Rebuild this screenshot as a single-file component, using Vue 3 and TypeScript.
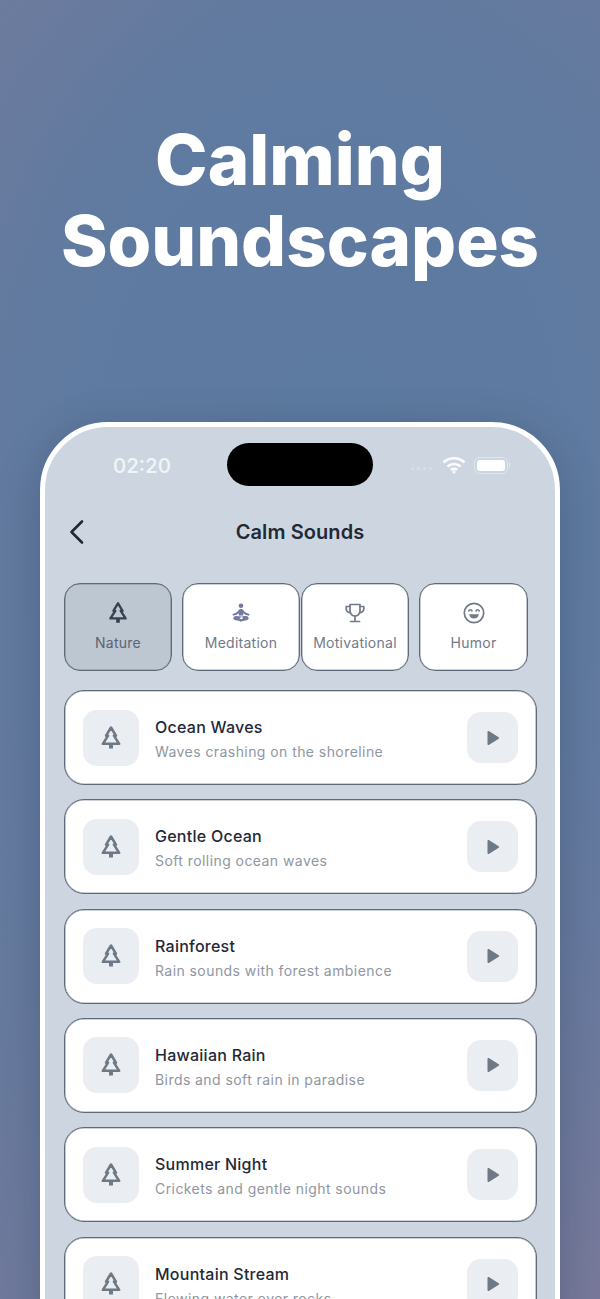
<template>
  <div class="page">
    <h1 class="headline">Calming<br />Soundscapes</h1>

    <div class="phone">
      <div class="island"></div>

      <div class="status-bar">
        <span class="time">02:20</span>
        <div class="status-icons">
          <div class="signal"><i v-for="n in 4" :key="n"></i></div>
          <svg class="wifi" viewBox="0 0 24 18" width="24" height="18">
            <path d="M1.500 6.500a15 15 0 0 1 21 0" />
            <path d="M5.500 10.500a9.500 9.500 0 0 1 13 0" />
            <path d="M9 14a4.500 4.500 0 0 1 6 0" />
            <circle cx="12" cy="16" r="1.600" />
          </svg>
          <div class="battery"><div class="battery-fill"></div></div>
        </div>
      </div>

      <header class="nav">
        <svg class="back" viewBox="0 0 16 26" width="16" height="26">
          <path d="M13 2.500 2.500 13 13 23.500" />
        </svg>
        <h2>Calm Sounds</h2>
      </header>

      <div class="tabs">
        <button
          v-for="tab in tabs"
          :key="tab.id"
          class="tab"
          :class="[tab.id, { active: tab.id === activeTab }]"
          @click="activeTab = tab.id"
        >
          <svg v-if="tab.id === 'nature'" class="tab-icon tree" viewBox="0 0 24 24" width="26" height="26">
            <path d="M12 3 7.800 10H9.500L5 17h14l-4.500-7h1.700Z" />
            <path class="solid" d="M10.300 17h3.400v4h-3.400Z" />
          </svg>
          <svg v-else-if="tab.id === 'meditation'" class="tab-icon" viewBox="0 0 24 24" width="24" height="24">
            <g class="calm">
              <circle cx="12" cy="4.800" r="2.300" />
              <path d="M12 8c-1.300 0-2.100.7-2.600 1.600-.8 1.300-2.400 2.200-4.500 3l-1.500.6.700 1.500 1.500-.4c1.900-.6 3.200-1.200 4.200-2.100V14.500h4.400v-2.300c1 .9 2.300 1.500 4.200 2.100l1.500.4.700-1.500-1.500-.6c-2.100-.8-3.700-1.700-4.500-3C14.100 8.700 13.300 8 12 8Z" />
              <path d="M6.800 15c-2.400.3-3.500 3.100-1.100 4l4.800.9 1.900-1.500-2-1.100 2.800-1.800Z" />
              <path d="M17.200 15c2.400.3 3.500 3.100 1.100 4l-7.300 1.700-.6-1.800 3.700-1.400-1.200-1.400 1.700-1Z" />
            </g>
          </svg>
          <svg v-else-if="tab.id === 'motivational'" class="tab-icon line" viewBox="0 0 24 24" width="24" height="24">
            <path d="M7 3.500h10v6.500a5 5 0 0 1-10 0Z" />
            <path d="M7 5.500H3.200v2.300c0 2 1.500 3.700 4.300 4M17 5.500h3.800v2.300c0 2-1.500 3.700-4.300 4" />
            <path d="M12 15v5M7.500 20.500h9" />
          </svg>
          <svg v-else class="tab-icon line" viewBox="0 0 24 24" width="24" height="24">
            <circle cx="12" cy="12" r="9.700" />
            <path d="M6.800 9.800c.7-1.400 2.500-1.400 3.200 0M14 9.800c.7-1.400 2.500-1.400 3.200 0" />
            <path class="solid" d="M7.200 13.200h9.600c-.2 2.700-2.300 4.300-4.800 4.300s-4.600-1.600-4.800-4.300Z" />
          </svg>
          <span>{{ tab.label }}</span>
        </button>
      </div>

      <div class="sound-list">
        <div v-for="sound in sounds" :key="sound.title" class="sound-card">
          <div class="sound-icon">
            <svg class="tree" viewBox="0 0 24 24" width="28" height="28">
              <path d="M12 3 7.800 10H9.500L5 17h14l-4.500-7h1.700Z" />
              <path class="solid" d="M10.300 17h3.400v4h-3.400Z" />
            </svg>
          </div>
          <div class="sound-text">
            <h3>{{ sound.title }}</h3>
            <p>{{ sound.subtitle }}</p>
          </div>
          <button class="play">
            <svg viewBox="0 0 14 16" width="14" height="16"><path d="M1.500 1.800c0-.7.700-1.100 1.300-.7l9.900 6.200c.5.300.5 1.100 0 1.400l-9.900 6.200c-.6.400-1.300 0-1.300-.7Z" /></svg>
          </button>
        </div>
      </div>
    </div>
  </div>
</template>

<script setup lang="ts">
import { ref } from 'vue'

interface Tab {
  id: string
  label: string
}

interface Sound {
  title: string
  subtitle: string
}

const tabs: Tab[] = [
  { id: 'nature', label: 'Nature' },
  { id: 'meditation', label: 'Meditation' },
  { id: 'motivational', label: 'Motivational' },
  { id: 'humor', label: 'Humor' }
]

const sounds: Sound[] = [
  { title: 'Ocean Waves', subtitle: 'Waves crashing on the shoreline' },
  { title: 'Gentle Ocean', subtitle: 'Soft rolling ocean waves' },
  { title: 'Rainforest', subtitle: 'Rain sounds with forest ambience' },
  { title: 'Hawaiian Rain', subtitle: 'Birds and soft rain in paradise' },
  { title: 'Summer Night', subtitle: 'Crickets and gentle night sounds' },
  { title: 'Mountain Stream', subtitle: 'Flowing water over rocks' }
]

const activeTab = ref('nature')
</script>

<style>
html,
body {
  margin: 0;
  overflow: hidden;
}
</style>

<style scoped>
.page {
  height: 1299px;
  overflow: hidden;
  box-sizing: border-box;
  padding-top: 119px;
  font-family: Inter, "Noto Sans", sans-serif;
  background:
    radial-gradient(ellipse 620px 900px at 55% 36%, #5d7aa0 0%, #607aa0 45%, rgba(96, 122, 160, 0) 100%),
    linear-gradient(135deg, #787c9b 0%, #697a9d 50%, #78799a 100%);
}

.headline {
  margin: 0;
  color: #fff;
  font-size: 70.700px;
  line-height: 81px;
  font-weight: 800;
  text-align: center;
  letter-spacing: 0;
}

.phone {
  position: relative;
  box-sizing: border-box;
  width: 520px;
  height: 1000px;
  margin: 141px auto 0;
  border: 5px solid #fff;
  border-radius: 68px 68px 0 0;
  background: #cdd6e0;
  box-shadow: 0 8px 40px rgba(40, 52, 80, 0.3);
}

.island {
  position: absolute;
  top: 16px;
  left: 182px;
  width: 146px;
  height: 43px;
  border-radius: 22px;
  background: #000;
}

.status-bar {
  display: flex;
  justify-content: space-between;
  align-items: center;
  height: 28px;
  padding: 24px 47px 0 68px;
}

.time {
  color: #f2f5f8;
  font-size: 20.500px;
  font-weight: 500;
}

.status-icons {
  display: flex;
  align-items: center;
}

.signal {
  display: flex;
  gap: 3px;
  margin: 7px 10px 0 0;
}

.signal i {
  width: 3px;
  height: 3px;
  border-radius: 50%;
  background: #d9e0e8;
}

.wifi {
  margin-right: 8px;
}

.wifi path {
  fill: none;
  stroke: #fbfcfd;
  stroke-width: 2.600;
}

.wifi circle {
  fill: #fbfcfd;
}

.battery {
  position: relative;
  box-sizing: border-box;
  width: 34px;
  height: 17px;
  padding: 2px;
  border: 1px solid #e0e6ec;
  border-radius: 6px;
}

.battery::after {
  content: "";
  position: absolute;
  top: 4px;
  right: -3px;
  width: 1px;
  height: 6px;
  background: #e0e6ec;
}

.battery-fill {
  height: 100%;
  border-radius: 3px;
  background: #fff;
}

.nav {
  position: relative;
  display: flex;
  align-items: center;
  justify-content: center;
  height: 40px;
  margin-top: 33px;
}

.nav h2 {
  margin: 0;
  color: #1f2937;
  font-size: 20px;
  line-height: 24px;
  font-weight: 600;
  letter-spacing: 0.1px;
}

.back {
  position: absolute;
  left: 24px;
  top: 7px;
}

.back path {
  fill: none;
  stroke: #1f2937;
  stroke-width: 2.600;
  stroke-linecap: round;
  stroke-linejoin: round;
}

.tabs {
  display: flex;
  margin: 31px 0 0 19px;
}

.tab {
  box-sizing: border-box;
  display: flex;
  flex-direction: column;
  align-items: center;
  width: 108px;
  height: 88px;
  margin-right: 10px;
  padding: 17px 0 0;
  border: 1px solid #5f6979;
  box-shadow: inset 0 0 0 0.6px rgba(95, 105, 121, 0.6);
  border-radius: 16px;
  background: #fff;
  color: #727a88;
  font-family: inherit;
  font-size: 14px;
  line-height: 18px;
  letter-spacing: 0.25px;
}

.tab.meditation {
  width: 118px;
  margin-right: 1px;
}

.tab.humor {
  width: 109px;
}

.tab.active {
  background: #bcc7d2;
  color: #5b6473;
}

.tab-icon {
  display: block;
  margin-bottom: 9px;
}

.tab-icon.tree {
  margin: -1px 0 8px;
}

.tab.active .tree path {
  stroke: #374151;
}

.tab.active .tree .solid {
  fill: #374151;
  stroke: none;
}

.tree path {
  fill: none;
  stroke: #6f7885;
  stroke-width: 2.200;
  stroke-linejoin: round;
}

.tree .solid {
  fill: #6f7885;
  stroke: none;
}

.calm {
  fill: #7479a0;
}

.line path,
.line circle {
  fill: none;
  stroke: #727a88;
  stroke-width: 1.700;
  stroke-linecap: round;
  stroke-linejoin: round;
}

.line .solid {
  fill: #727a88;
  stroke: none;
}

.sound-list {
  display: flex;
  flex-direction: column;
  gap: 14.320px;
  margin: 19px 18px 0 19px;
}

.sound-card {
  box-sizing: border-box;
  display: flex;
  align-items: center;
  flex-shrink: 0;
  height: 95px;
  padding: 0 18px;
  border: 1px solid #5f6979;
  box-shadow: inset 0 0 0 0.6px rgba(95, 105, 121, 0.6);
  border-radius: 20px;
  background: #fff;
}

.sound-icon {
  display: flex;
  align-items: center;
  justify-content: center;
  flex-shrink: 0;
  width: 56px;
  height: 56px;
  border-radius: 14px;
  background: #eaedf2;
}

.sound-text {
  flex: 1;
  margin-left: 16px;
  padding-top: 2px;
}

.sound-text h3 {
  margin: 0 0 5px;
  color: #1f2937;
  font-size: 16px;
  line-height: 22px;
  font-weight: 450;
  letter-spacing: 0.25px;
}

.sound-text p {
  margin: 0;
  color: #8f96a2;
  font-size: 14px;
  line-height: 18px;
  letter-spacing: 0.43px;
}

.play {
  display: flex;
  align-items: center;
  justify-content: center;
  width: 51px;
  height: 51px;
  padding: 0;
  border: none;
  border-radius: 14px;
  background: #eaedf2;
}

.play svg {
  fill: #6f7885;
}
</style>
